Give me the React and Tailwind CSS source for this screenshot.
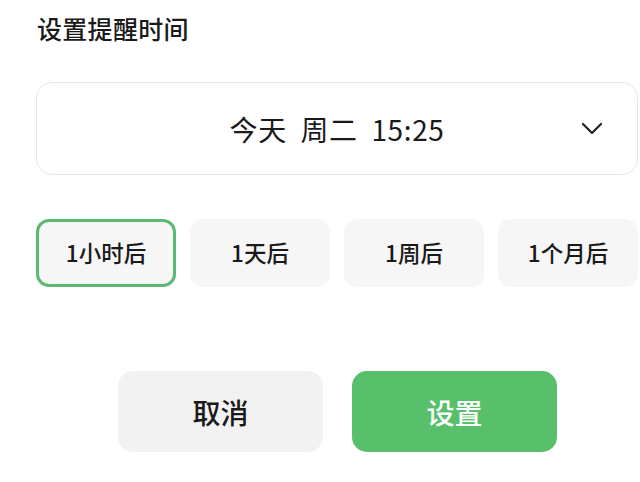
import React from "react";

const font = { fontFamily: '"Noto Sans CJK SC", "Noto Sans", sans-serif' };

export default function App() {
  const chips = ["1小时后", "1天后", "1周后", "1个月后"];
  return (
    <div
      className="w-[640px] h-[482px] bg-white overflow-hidden text-[#1a1a1a] font-['Noto_Sans_CJK_SC',sans-serif]"
      style={font}
    >
      <div className="pl-[37px] pt-[11px] text-[25px] font-medium leading-[34px] tracking-[0.3px]">
        设置提醒时间
      </div>
      <div className="ml-[36px] mr-[2px] mt-[37px] h-[93px] rounded-[16px] border-[1.5px] border-[#e6e6e6] flex items-center relative">
        <div className="flex-1 text-center text-[28px] leading-none tracking-[0.6px]">
          今天&nbsp;&nbsp;周二&nbsp;&nbsp;15:25
        </div>
        <svg
          className="absolute right-[34px] top-[39px]"
          width="22"
          height="14"
          viewBox="0 0 22 14"
          fill="none"
        >
          <path d="M2 2 L11 11 L20 2" stroke="#222" strokeWidth="2.2" strokeLinecap="round" strokeLinejoin="round" />
        </svg>
      </div>
      <div className="ml-[36px] mt-[44px] flex gap-[14px]">
        {chips.map((c, i) => (
          <div
            key={c}
            className={
              i === 0
                ? "w-[140px] h-[68px] shrink-0 rounded-[13px] bg-[#f6f6f6] border-[3px] border-[#5db874] flex items-center justify-center text-[22.5px] font-medium"
                : "w-[140px] h-[68px] shrink-0 rounded-[13px] bg-[#f6f6f6] flex items-center justify-center text-[22.5px] font-medium"
            }
          >
            {c}
          </div>
        ))}
      </div>
      <div className="mt-[84px] flex justify-center gap-[29px] pl-[35px]">
        <div className="w-[205px] h-[81px] rounded-[15px] bg-[#f2f2f2] flex items-center justify-center text-[28px] font-medium">
          取消
        </div>
        <div className="w-[205px] h-[81px] rounded-[15px] bg-[#58bf6b] flex items-center justify-center text-[28px] font-medium text-white">
          设置
        </div>
      </div>
    </div>
  );
}
